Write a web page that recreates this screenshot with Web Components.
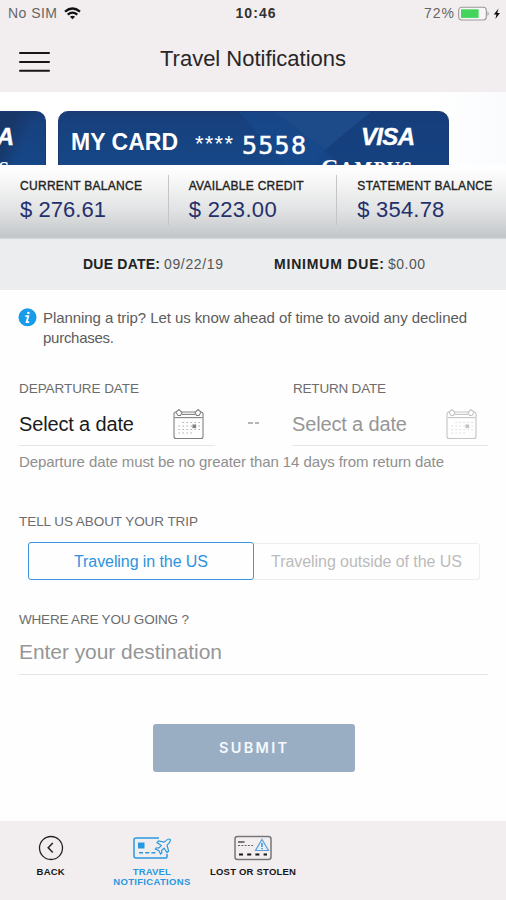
<!DOCTYPE html>
<html lang="en">
<head>
<meta charset="utf-8">
<title>Travel Notifications</title>
<style>
body{margin:0;background:#fefefe;font-family:"Liberation Sans",Arial,sans-serif;color:#222}
</style>
</head>
<body>
<travel-app></travel-app>
<script>
const define = (name, html, init) => {
  const t = document.createElement('template');
  t.innerHTML = html;
  customElements.define(name, class extends HTMLElement {
    constructor(){ super(); this.attachShadow({mode:'open'}).append(t.content.cloneNode(true)); }
    connectedCallback(){ if(init) init(this, this.shadowRoot); }
  });
};

/* One line of text, tracked so that it fills the width in its w attribute. */
define('tracked-text', `<style>
:host{display:inline-block;white-space:nowrap;flex:none}
span{display:inline-block}
</style><span><slot></slot></span>`, (el, root) => {
  const s = root.querySelector('span'), w = +el.getAttribute('w');
  const text = root.querySelector('slot').assignedNodes({flatten:true}).map(n => n.textContent).join('');
  el.style.width = w + 'px';
  const gap = (w - s.getBoundingClientRect().width) / Math.max(1, text.length - 1);
  s.style.letterSpacing = gap.toFixed(3) + 'px';
});

define('status-bar', `<style>
:host{display:grid;grid-template-columns:1fr 40px 1fr;height:27px;align-items:center;font-size:14px;line-height:27px;color:#666;padding:0 5px 0 8px}
.l,.r{display:flex;align-items:center}
.l{gap:7px}.r{justify-content:flex-end;gap:4px}
b{color:#333;margin-left:1px}
</style>
<div class="l"><tracked-text w="49">No SIM</tracked-text>
<svg width="17" height="13" viewBox="0 0 17 13" fill="none" stroke="#111" stroke-width="2.3"><path d="M1 4.6Q8.5-1.7 16 4.6"/><path d="M3.7 7.7Q8.5 3.6 13.3 7.7"/><path d="M8.5 12.3L5.9 9.8Q8.5 7.7 11.1 9.8Z" fill="#111" stroke="none"/></svg></div>
<b><tracked-text w="40">10:46</tracked-text></b>
<div class="r"><tracked-text w="30">72%</tracked-text>
<svg width="43" height="16" viewBox="0 0 43 16"><rect x=".7" y="1.2" width="27.6" height="12.8" rx="3" fill="#f8f6f6" stroke="#999" stroke-width="1.1"/><rect x="3" y="3.3" width="17.6" height="8.6" fill="#43d45b"/><path d="M29.5 5.2Q32 7.6 29.5 10Z" fill="#999"/><path d="M40.5 2.5L35.8 8.4H38.4L37.4 13L42 7H39.3Z" fill="#111"/></svg></div>`);

define('nav-header', `<style>
:host{display:grid;grid-template-columns:141px 1fr;height:65px;align-items:center;padding:0 0 0 19px;font-size:22px;line-height:30px;color:#282628}
svg{margin-top:4px}
tracked-text{margin-top:-2px}
</style><svg width="31" height="22" viewBox="0 0 31 22" stroke="#171517" stroke-width="2" stroke-linecap="round"><path d="M1 2H30M1 11H30M1 19.8H30"/></svg><tracked-text w="186"><slot></slot></tracked-text>`);

define('credit-card', `<style>
:host{display:block;flex:none;box-sizing:border-box;width:391px;height:90px;border-radius:10px;position:relative;overflow:hidden;color:#fff;border:1px solid #193b75;background:linear-gradient(180deg,#193d77 0,#17417f 12px,#164888 60px)}
.deco{position:absolute;left:0;top:0}
.row{position:relative;display:flex;height:60px;align-items:center;padding-left:12px}
.name{font:bold 23px/30px "Liberation Sans",Arial,sans-serif;margin-top:-1px}
.stars{font:22px/30px "Liberation Sans",Arial,sans-serif;margin:3px 0 0 17px}
.num{font:25px/30px "DejaVu Sans Mono",monospace;margin:7px 0 0 9px;-webkit-text-stroke:.5px #fff}
.visa{font:italic bold 24px/30px "Liberation Sans",Arial,sans-serif;margin:-10px 0 0 55px;-webkit-text-stroke:.4px #fff}
.campus{position:absolute;left:262px;top:40px;font:bold 24px/30px "Liberation Serif",serif}
.campus small{font-size:19px;line-height:0}
</style><svg class="deco" width="391" height="90"><path d="M215 0L266 38L312 0Z" fill="#1d4a89"/><path d="M312 0L266 38L314 90H391V0Z" fill="#153e7c" opacity=".6"/><path d="M180 0L215 0L266 38L240 70Z" fill="#174b90" opacity=".6"/></svg>
<div class="row"><tracked-text class="name" w="107">MY CARD</tracked-text><tracked-text class="stars" w="38">****</tracked-text><tracked-text class="num" w="64">5558</tracked-text><tracked-text class="visa" w="54">VISA</tracked-text></div><tracked-text class="campus" w="91">C<small>AMPUS</small></tracked-text>`);

define('card-peek', `<style>
:host{display:flex;justify-content:flex-end;flex:none;box-sizing:border-box;width:46px;height:90px;border-radius:0 10px 0 0;overflow:hidden;color:#fff;border:1px solid #193b75;border-left:0;background:linear-gradient(115deg,#173769 0 15px,transparent 35px),linear-gradient(180deg,#193d77 0,#17417f 12px,#164888 60px);position:relative}
.a{font:italic bold 24px/30px "Liberation Sans",Arial,sans-serif;margin:10px 31px 0 0;-webkit-text-stroke:.4px #fff}
.s{position:absolute;right:36px;top:42px;font:bold 19px/30px "Liberation Serif",serif}
</style><span class="a">A</span><span class="s">S</span>`);

define('card-carousel', `<style>
:host{display:flex;height:54px;padding-top:19px;gap:12px;overflow:hidden;background:linear-gradient(90deg,#fff 85%,#f9fbfd)}
</style><card-peek></card-peek><credit-card></credit-card>`);

define('balance-item', `<style>
:host{display:flex;flex-direction:column;gap:5px;height:50px;padding-left:20px;box-sizing:border-box;width:168.7px;border-right:1px solid var(--rule,#c5c5c7)}
.k{font-size:12px;line-height:14px;margin-top:4px;color:#222;-webkit-text-stroke:.35px #222}
.v{font-size:22px;line-height:24px;color:#24306b}
</style><div class="k"><slot name="label"></slot></div><div class="v"><slot></slot></div>`);

define('balance-bar', `<style>
:host{display:flex;height:64px;padding-top:10px;background:linear-gradient(180deg,#fff 0,#fafafa 15%,#e2e3e4 60%,#cbced0 88%,#c3c6c9 97%,#d5d8da 100%)}
balance-item:last-child{--rule:transparent}
</style>
<balance-item><tracked-text slot="label" w="122">CURRENT BALANCE</tracked-text><tracked-text w="86">$ 276.61</tracked-text></balance-item>
<balance-item><tracked-text slot="label" w="115">AVAILABLE CREDIT</tracked-text><tracked-text w="88">$ 223.00</tracked-text></balance-item>
<balance-item><tracked-text slot="label" w="135">STATEMENT BALANCE</tracked-text><tracked-text w="87">$ 354.78</tracked-text></balance-item>`);

define('due-bar', `<style>
:host{display:flex;align-items:center;box-sizing:border-box;height:51px;padding:0 0 1px 83px;background:#ebedef;font-size:14px;line-height:20px;color:#555}
b{color:#222}
b+tracked-text{margin-left:4px}
b:nth-of-type(2){margin-left:51px}
</style><b><tracked-text w="77">DUE DATE:</tracked-text></b><tracked-text w="59">09/22/19</tracked-text><b><tracked-text w="110">MINIMUM DUE:</tracked-text></b><tracked-text w="37">$0.00</tracked-text>`);

define('info-note', `<style>
:host{display:flex;gap:6px;font-size:15px;line-height:20px;color:#5c5c5c}
svg{flex:none;margin-left:-1px}
div{display:flex;flex-direction:column}
</style><svg width="19" height="19" viewBox="0 0 19 19"><circle cx="9.5" cy="9.3" r="9" fill="#179bea"/><g fill="none" stroke="#fff"><path d="M10.4 3.9V6" stroke-width="2.3"/><path d="M7.3 8.2H10.3L8.6 14.2H11.2" stroke-width="1.8"/></g></svg>
<div><tracked-text w="424">Planning a trip? Let us know ahead of time to avoid any declined</tracked-text><tracked-text w="71">purchases.</tracked-text></div>`);

define('field-label', `<style>:host{display:block;font-size:13.5px;line-height:18px;color:#6c6c6c}</style><slot></slot>`);

define('date-field', `<style>
:host{display:block;width:196px;color:#1b1b1b;--icon:#808080}
:host([muted]){color:#969696;--icon:#c4c4c4}
.in{display:flex;justify-content:space-between;height:41px;margin-top:6px;border-bottom:1px solid #e6e6e6;align-items:center;font-size:20px;line-height:26px;padding-right:11px}
.in tracked-text{margin-top:-1px}
</style><field-label><slot name="label"></slot></field-label><div class="in"><tracked-text w="115">Select a date</tracked-text>
<svg width="31" height="31" viewBox="0 0 31 31" fill="none" stroke="var(--icon)" stroke-width="1.1"><rect x="1" y="3" width="29" height="26.5" rx="2" /><path d="M1.5 8.6H29.5"/><path d="M9 5.4H22"/><path d="M6 .5L3 3.2L5 6.5H7.5L9 3.5ZM25 .5L28 3.2L26 6.5H23.5L22 3.5Z" fill="#fefefe"/><path d="M9.5 13.5H27M5.5 17H27M5.5 20.5H27M5.5 24H19" stroke-dasharray="1.4 2.6" opacity=".65"/><rect x="20" y="16" width="2.6" height="2.6" fill="var(--icon)"/></svg></div>`);

define('trip-toggle', `<style>
:host{display:flex;height:38px;margin:11px 8px 0 9px;font-size:16px;line-height:36px;align-items:center}
div{box-sizing:border-box;display:flex;justify-content:center;align-items:center;padding-top:1px}
.on{width:226px;height:38px;border:1px solid #3d94e0;border-radius:3px;color:#2b93df}
.off{width:226px;height:37px;border:1px solid #eee;border-left:0;border-radius:0 3px 3px 0;color:#bbb;padding-top:2px}
</style><div class="on"><tracked-text w="134">Traveling in the US</tracked-text></div><div class="off"><tracked-text w="191">Traveling outside of the US</tracked-text></div>`);

define('submit-button', `<style>
:host{display:flex;justify-content:center;align-items:center;box-sizing:border-box;width:202px;height:48px;padding-right:2px;margin:49px 0 0 134px;border-radius:3px;background:#9aaec3;color:#f5f9ff;font:600 14.5px/20px Inter,sans-serif}
</style><tracked-text w="68"><slot></slot></tracked-text>`);

define('travel-form', `<style>
:host{display:block;height:513px;padding:18px 18px 0 19px}
.dates{display:flex;justify-content:space-between;margin:32px 0 6px;align-items:flex-start}
.dash{width:11px;display:flex;gap:2px;margin-top:42px}
.dash i{width:5px;height:2px;background:#b5b5b5}
.help{font-size:15px;line-height:20px;color:#8f8f8f;height:20px;margin-bottom:41px}
.where{margin-top:31px}
.dest{display:flex;align-items:center;height:44px;margin-top:1px;border-bottom:1px solid #e6e6e6;font-size:21px;line-height:28px;color:#969696}
.ret{padding-left:1px}
</style><info-note></info-note>
<div class="dates"><date-field><tracked-text slot="label" w="120">DEPARTURE DATE</tracked-text></date-field><div class="dash"><i></i><i></i></div><date-field muted><tracked-text class="ret" slot="label" w="93">RETURN DATE</tracked-text></date-field></div>
<div class="help"><tracked-text w="425">Departure date must be no greater than 14 days from return date</tracked-text></div>
<field-label><tracked-text w="179">TELL US ABOUT YOUR TRIP</tracked-text></field-label>
<trip-toggle></trip-toggle>
<field-label class="where"><tracked-text w="170">WHERE ARE YOU GOING ?</tracked-text></field-label>
<div class="dest"><tracked-text w="203">Enter your destination</tracked-text></div>
<submit-button>SUBMIT</submit-button>`);

define('tab-item', `<style>
:host{display:flex;flex-direction:column;align-items:center;width:101.2px;color:#171517;font-size:9.5px;font-weight:bold;line-height:10px}
.i{height:28px;display:flex;align-items:center;margin-bottom:5px}
</style><div class="i"><slot name="icon"></slot></div><slot></slot>`);

define('tab-bar', `<style>
:host{display:flex;height:66px;padding-top:13px;background:#f2eeef}
.sel{color:#2899df}
svg{display:block}
</style>
<tab-item><svg slot="icon" width="26" height="26" viewBox="0 0 26 26" fill="none" stroke="#252325"><circle cx="13" cy="13" r="11.5" stroke-width="1.3"/><path d="M14.8 8L10.2 12.8L14.8 17.6" stroke-width="1.5"/></svg><tracked-text w="28">BACK</tracked-text></tab-item>
<tab-item class="sel"><svg slot="icon" width="40" height="26" viewBox="0 0 40 26" fill="none" stroke="#2899df" stroke-width="1.5"><path d="M27 3H4Q2 3 2 5V21Q2 23 4 23H34Q35 23 35 22V19"/><rect x="6" y="7.5" width="6.5" height="6" fill="#2899df" stroke="none"/><path d="M7 17.8H24" stroke-dasharray="4 2.2"/><path d="M38.2 4.4Q36.5 3.2 34 5.6L32 7.2L26.5 5.8L25 7.6L29.3 10.6L27 13L24.3 12.8L23.4 14L26.8 15.6L28.6 19L29.8 18L29.6 15.4L32 13.2L35 17.6L36.6 16L35 10.2L36.8 8.4Q39 5.8 38.2 4.4Z" stroke-width="1.2"/></svg><tracked-text w="38">TRAVEL</tracked-text><tracked-text w="77">NOTIFICATIONS</tracked-text></tab-item>
<tab-item><svg slot="icon" width="38" height="26" viewBox="0 0 38 26" fill="none" stroke="#666"><rect x="1" y="1.5" width="36" height="23" rx="2.5" stroke-width="1.5" stroke="#777"/><path d="M4 7H10.5" stroke="#333" stroke-width="1.3"/><path d="M4 10.5H20" stroke-dasharray="2 1.3"/><path d="M5 19.5H33" stroke="#171517" stroke-width="2.2" stroke-dasharray="4 4.2"/><path d="M28 4.5L34.5 15.5H21.5Z" stroke="#5c9fd8" stroke-width="1.2" fill="#e6f0f9"/><path d="M28 8V12M28 13V14.3" stroke="#287fc4" stroke-width="1.3"/></svg><tracked-text w="86">LOST OR STOLEN</tracked-text></tab-item>`);

define('travel-app', `<style>
:host{display:flex;flex-direction:column;width:506px;height:900px;overflow:hidden;background:#fefefe}
header{background:#f2eeef}
</style><header><status-bar></status-bar><nav-header>Travel Notifications</nav-header></header>
<card-carousel></card-carousel><balance-bar></balance-bar><due-bar></due-bar><travel-form></travel-form><tab-bar></tab-bar>`);
</script>
</body>
</html>
